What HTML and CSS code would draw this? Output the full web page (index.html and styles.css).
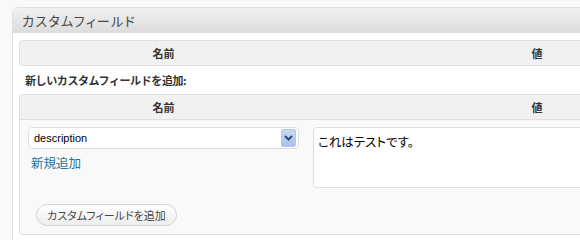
FILE: index.html
```html
<!DOCTYPE html>
<html lang="ja">
<head>
    <meta charset="UTF-8">
    <title>カスタムフィールド</title>
    <link rel="stylesheet" href="styles.css">
</head>
<body>
    <div class="postbox">
        <h3 class="hndle">カスタムフィールド</h3>
        <div class="inside">
            <div class="list-table">
                <div class="thead">
                    <div class="th col-key">名前</div>
                    <div class="th col-value">値</div>
                </div>
            </div>

            <p class="add-title">新しいカスタムフィールドを追加:</p>

            <div class="list-table new-meta">
                <div class="thead">
                    <div class="th col-key">名前</div>
                    <div class="th col-value">値</div>
                </div>
                <div class="tbody">
                    <div class="td col-key">
                        <div class="select">
                            <span class="select-text">description</span>
                            <span class="select-arrow">
                                <svg width="9" height="6" viewBox="0 0 9 6"><path d="M1 1 L4.5 4.5 L8 1" fill="none" stroke="#2c4a7a" stroke-width="2"/></svg>
                            </span>
                        </div>
                        <a class="enter-new" href="#">新規追加</a>
                    </div>
                    <div class="td col-value">
                        <div class="textarea">これはテストです。</div>
                    </div>
                    <div class="submit-row">
                        <button class="button">カスタムフィールドを追加</button>
                    </div>
                </div>
            </div>
        </div>
    </div>
</body>
</html>
```

FILE: styles.css
```css
* {
    margin: 0;
    padding: 0;
    box-sizing: border-box;
}

html, body {
    height: 240px;
    overflow: hidden;
}

body {
    background: #f9f9f9;
    font-family: "Liberation Sans", "Noto Sans CJK JP", sans-serif;
    color: #333;
}

.postbox {
    margin: 7px 0 0 12px;
    width: 820px;
    height: 240px;
    background: #fff;
    border: 1px solid #dfdfdf;
    border-radius: 6px 0 0 0;
}

.hndle {
    height: 25px;
    padding: 0 0 0 9px;
    background: linear-gradient(#f0f0f0, #dcdcdc);
    border-radius: 6px 0 0 0;
    font-family: "Noto Sans CJK JP", sans-serif;
    font-feature-settings: "palt";
    font-size: 13px;
    font-weight: normal;
    letter-spacing: 1.3px;
    line-height: 25px;
    color: #464646;
}

.inside {
    padding: 7px 6px 0 6px;
}

.list-table {
    width: 760px;
    border: 1px solid #dfdfdf;
    border-radius: 4px;
    background: #f1f1f1;
}

.thead {
    display: grid;
    grid-template-columns: 287px 460px;
    height: 24px;
}

.th {
    font-family: "Noto Sans CJK JP", sans-serif;
    font-size: 11px;
    font-weight: bold;
    line-height: 24px;
    text-align: center;
    color: #333;
}

.add-title {
    height: 28px;
    padding-left: 6px;
    font-family: "Noto Sans CJK JP", sans-serif;
    font-size: 11px;
    font-weight: bold;
    letter-spacing: -0.4px;
    line-height: 28px;
    color: #333;
}

.new-meta .tbody {
    display: grid;
    grid-template-columns: 287px 460px;
    grid-template-rows: 84px auto;
    background: #f9f9f9;
    border-top: 1px solid #dfdfdf;
    border-radius: 0 0 4px 4px;
    height: 115px;
}

.td.col-key {
    padding: 7px 0 0 8px;
}

.td.col-value {
    padding: 7px 0 0 6px;
}

.select {
    display: flex;
    align-items: center;
    justify-content: space-between;
    width: 271px;
    height: 22px;
    background: #fff;
    border: 1px solid #dfdfdf;
    border-radius: 4px;
    padding: 0 2px 0 5px;
}

.select-text {
    font-size: 11px;
    color: #000;
}

.select-arrow {
    display: flex;
    align-items: center;
    justify-content: center;
    width: 15px;
    height: 18px;
    background: linear-gradient(#c9d9f5, #a9c1ec);
    border: 1px solid #b5c8ea;
    border-radius: 2px;
}

.enter-new {
    display: block;
    margin: 6px 0 0 3px;
    font-family: "Noto Sans CJK JP", sans-serif;
    font-size: 12.5px;
    line-height: 16px;
    color: #21759b;
    text-decoration: none;
}

.textarea {
    width: 300px;
    height: 61px;
    background: #fff;
    border: 1px solid #dfdfdf;
    border-radius: 4px;
    padding: 4px 4px;
    font-family: "Noto Sans CJK JP", sans-serif;
    font-feature-settings: "palt";
    font-size: 12.5px;
    color: #000;
}

.submit-row {
    grid-column: 1 / 3;
    padding: 0 0 0 16px;
}

.button {
    height: 22px;
    padding: 0 10px;
    background: linear-gradient(#fff, #ededed);
    border: 1px solid #d6d6d6;
    border-radius: 11px;
    font-family: "Noto Sans CJK JP", sans-serif;
    font-feature-settings: "palt";
    font-size: 11px;
    color: #464646;
    cursor: pointer;
}
```
